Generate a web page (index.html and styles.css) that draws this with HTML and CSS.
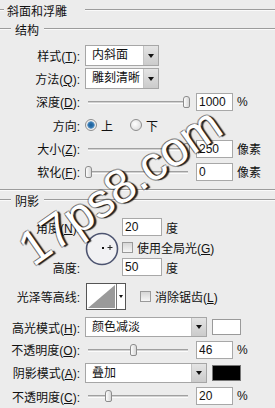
FILE: index.html
```html
<!DOCTYPE html>
<html lang="zh-CN">
<head>
  <meta charset="UTF-8">
  <title>斜面和浮雕</title>
  <link rel="stylesheet" href="styles.css">
</head>
<body>
  <div class="panel">
    <div class="legend legend-top"><span>斜面和浮雕</span></div>
    <div class="legend legend-sub"><span>结构</span></div>

    <div class="row row-first">
      <span class="lbl">样式(<u>T</u>):</span>
      <div class="select select-short"><span class="val">内斜面</span><span class="arrow"></span></div>
    </div>
    <div class="row">
      <span class="lbl">方法(<u>Q</u>):</span>
      <div class="select select-short"><span class="val">雕刻清晰</span><span class="arrow"></span></div>
    </div>
    <div class="row">
      <span class="lbl">深度(<u>D</u>):</span>
      <div class="slider"><span class="thumb" style="left: 98px"></span></div>
      <input class="num" type="text" value="1000">
      <span class="unit">%</span>
    </div>
    <div class="row row-dir">
      <span class="lbl">方向:</span>
      <span class="radio on"></span><span class="opt">上</span>
      <span class="radio"></span><span class="opt">下</span>
    </div>
    <div class="row">
      <span class="lbl">大小(<u>Z</u>):</span>
      <div class="slider"><span class="thumb" style="left: 98px"></span></div>
      <input class="num" type="text" value="250">
      <span class="unit">像素</span>
    </div>
    <div class="row">
      <span class="lbl">软化(<u>F</u>):</span>
      <div class="slider"><span class="thumb" style="left: 0px"></span></div>
      <input class="num" type="text" value="0">
      <span class="unit">像素</span>
    </div>

    <div class="sep"></div>
    <div class="legend legend-sub"><span>阴影</span></div>

    <div class="angle">
      <span class="lbl a-lbl1">角度(<u>N</u>):</span>
      <div class="dial">
        <svg width="34" height="34" viewBox="0 0 34 34">
          <circle cx="17" cy="17" r="15.5" fill="#f1f1f3" stroke="#4d5470" stroke-width="1.6"/>
          <rect x="17" y="15" width="2" height="2" fill="#111"/>
          <path d="M25 13v5M22.5 15.5h5" stroke="#222" stroke-width="1"/>
        </svg>
      </div>
      <div class="a-ctl a-row1">
        <input class="num num-angle" type="text" value="20">
        <span class="unit">度</span>
      </div>
      <div class="a-ctl a-row2">
        <span class="check"></span><span>使用全局光(<u>G</u>)</span>
      </div>
      <span class="lbl a-lbl3">高度:</span>
      <div class="a-ctl a-row3">
        <input class="num num-angle" type="text" value="50">
        <span class="unit">度</span>
      </div>
    </div>

    <div class="row row-contour">
      <span class="lbl">光泽等高线:</span>
      <div class="contour">
        <svg width="40" height="27" viewBox="0 0 40 27">
          <rect x="0.5" y="0.5" width="39" height="26" fill="#fff" stroke="#555"/>
          <polygon points="2,25 29,2 29,25" fill="#9a9a9a"/>
          <line x1="30.5" y1="1" x2="30.5" y2="26" stroke="#777"/>
          <polygon points="33,12 37,12 35,15" fill="#111"/>
        </svg>
      </div>
      <span class="check check-aa"></span><span>消除锯齿(<u>L</u>)</span>
    </div>

    <div class="row row-mode">
      <span class="lbl">高光模式(<u>H</u>):</span>
      <div class="select select-long"><span class="val">颜色减淡</span><span class="arrow"></span></div>
      <span class="swatch swatch-white"></span>
    </div>
    <div class="row">
      <span class="lbl">不透明度(<u>O</u>):</span>
      <div class="slider"><span class="thumb" style="left: 45px"></span></div>
      <input class="num" type="text" value="46">
      <span class="unit">%</span>
    </div>
    <div class="row">
      <span class="lbl">阴影模式(<u>A</u>):</span>
      <div class="select select-long"><span class="val">叠加</span><span class="arrow"></span></div>
      <span class="swatch swatch-black"></span>
    </div>
    <div class="row row-last">
      <span class="lbl">不透明度(<u>C</u>):</span>
      <div class="slider"><span class="thumb" style="left: 20px"></span></div>
      <input class="num" type="text" value="20">
      <span class="unit">%</span>
    </div>

    <div class="watermark">17ps8.com</div>
  </div>
</body>
</html>
```

FILE: styles.css
```css
body {
  margin: 0;
  padding: 0;
  background-color: #ececec;
  color: #111;
  font-family: 'Liberation Sans', 'Noto Sans CJK SC', sans-serif;
  font-size: 12px;
  overflow: hidden;
}
.panel {
  position: relative;
  width: 275px;
  height: 408px;
  overflow: hidden;
}
.legend {
  display: flex;
  align-items: center;
  height: 20px;
}
.legend::before,
.legend::after {
  content: '';
  height: 0;
  border-top: 1px solid #9c9c9c;
  border-bottom: 1px solid #fafafa;
}
.legend::after {
  flex: 1;
}
.legend-top::before {
  width: 4px;
}
.legend-top span {
  padding: 0 18px 0 3px;
}
.legend-sub {
  height: 18px;
}
.legend-sub::before {
  width: 11px;
}
.legend-sub span {
  padding: 0 5px 0 4px;
}
.row {
  display: flex;
  align-items: center;
  height: 23px;
}
.row-first {
  margin-top: 6px;
}
.row-dir {
  height: 24px;
}
.row-last {
  height: 24px;
}
.lbl {
  flex: none;
  width: 80px;
  text-align: right;
  white-space: nowrap;
}
.select {
  display: flex;
  box-sizing: border-box;
  height: 21px;
  margin-left: 5px;
  border: 1px solid #a6a6a6;
  background-color: #fff;
}
.select-short {
  width: 74px;
}
.select-long {
  width: 122px;
  height: 20px;
}
.select .val {
  flex: 1;
  padding-left: 6px;
  line-height: 19px;
  white-space: nowrap;
  overflow: hidden;
}
.select-long .val {
  line-height: 18px;
}
.select .arrow {
  display: flex;
  align-items: center;
  justify-content: center;
  width: 14px;
  border-left: 1px solid #c4c4c4;
  background: linear-gradient(#e4e4e4, #cbcbcb);
}
.select .arrow::after {
  content: '';
  border-left: 3px solid transparent;
  border-right: 3px solid transparent;
  border-top: 4px solid #111;
}
.slider {
  position: relative;
  flex: none;
  width: 105px;
  height: 14px;
  margin-left: 5px;
}
.slider::before {
  content: '';
  position: absolute;
  left: 3px;
  right: 2px;
  top: 6px;
  height: 1px;
  background-color: #d2d2d2;
  border-top: 1px solid #a0a0a0;
  border-bottom: 1px solid #fbfbfb;
}
.thumb {
  position: absolute;
  top: 1px;
  box-sizing: border-box;
  width: 7px;
  height: 12px;
  border: 1px solid #8c8c8c;
  border-radius: 3px 3px 2px 2px;
  background: linear-gradient(90deg, #fdfdfd, #d6d6d6);
}
.num {
  box-sizing: border-box;
  width: 37px;
  height: 18px;
  margin: 0 0 0 6px;
  padding: 0 0 0 2px;
  border: 1px solid #a8a8a8;
  background-color: #fff;
  color: #111;
  font-family: 'Liberation Sans', sans-serif;
  font-size: 12px;
  outline: none;
}
.unit {
  margin-left: 4px;
}
.radio {
  flex: none;
  box-sizing: border-box;
  width: 12px;
  height: 12px;
  margin-left: 5px;
  border: 1px solid #8e8e8e;
  border-radius: 50%;
  background: radial-gradient(circle at 40% 40%, #fff, #d4d4d4);
}
.radio.on {
  background: radial-gradient(circle, #1a5c96 0, #2f75b0 2.5px, #7aa6cc 3.5px, #efefef 4px);
}
.opt {
  margin-left: 4px;
  width: 24px;
}
.check {
  flex: none;
  box-sizing: border-box;
  width: 11px;
  height: 11px;
  margin-right: 4px;
  border: 1px solid #9a9a9a;
  background: linear-gradient(#d6d6d6, #f6f6f6);
}
.sep {
  margin-top: 6px;
  border-top: 1px solid #9c9c9c;
  border-bottom: 1px solid #fafafa;
}
.angle {
  display: grid;
  grid-template-columns: 80px 42px 1fr;
  grid-template-rows: 20px 20px 20px;
  margin-top: 8px;
}
.angle .lbl {
  align-self: center;
}
.a-lbl1 {
  grid-row: 1;
  grid-column: 1;
}
.a-lbl3 {
  grid-row: 3;
  grid-column: 1;
}
.dial {
  grid-row: 1 / 4;
  grid-column: 2;
  align-self: center;
  margin: 4px 0 0 5px;
  height: 34px;
}
.a-ctl {
  grid-column: 3;
  display: flex;
  align-items: center;
}
.a-row1 {
  grid-row: 1;
}
.a-row2 {
  grid-row: 2;
}
.a-row3 {
  grid-row: 3;
}
.num-angle {
  width: 40px;
  margin-left: 0;
}
.row-contour {
  height: 30px;
  margin-top: 4px;
}
.contour {
  height: 27px;
  margin-left: 6px;
}
.check-aa {
  margin-left: 14px;
}
.row-mode {
  height: 22px;
  margin-top: 5px;
}
.swatch {
  box-sizing: border-box;
  width: 29px;
  height: 16px;
  margin-left: 5px;
  border: 1px solid #9a9a9a;
}
.swatch-white {
  background-color: #fff;
}
.swatch-black {
  background-color: #000;
  border-color: #777;
}
.watermark {
  position: absolute;
  left: 24px;
  top: 230px;
  font-family: 'Liberation Sans', sans-serif;
  font-size: 48px;
  line-height: 48px;
  color: #fff;
  white-space: nowrap;
  transform: rotate(-35deg);
  transform-origin: 0 50%;
  text-shadow: 2px 2px 1px rgba(0, 0, 0, 0.85), -1px -1px 0 rgba(0, 0, 0, 0.35), 1px -1px 0 rgba(0, 0, 0, 0.3), -1px 1px 0 rgba(0, 0, 0, 0.3);
}
```
